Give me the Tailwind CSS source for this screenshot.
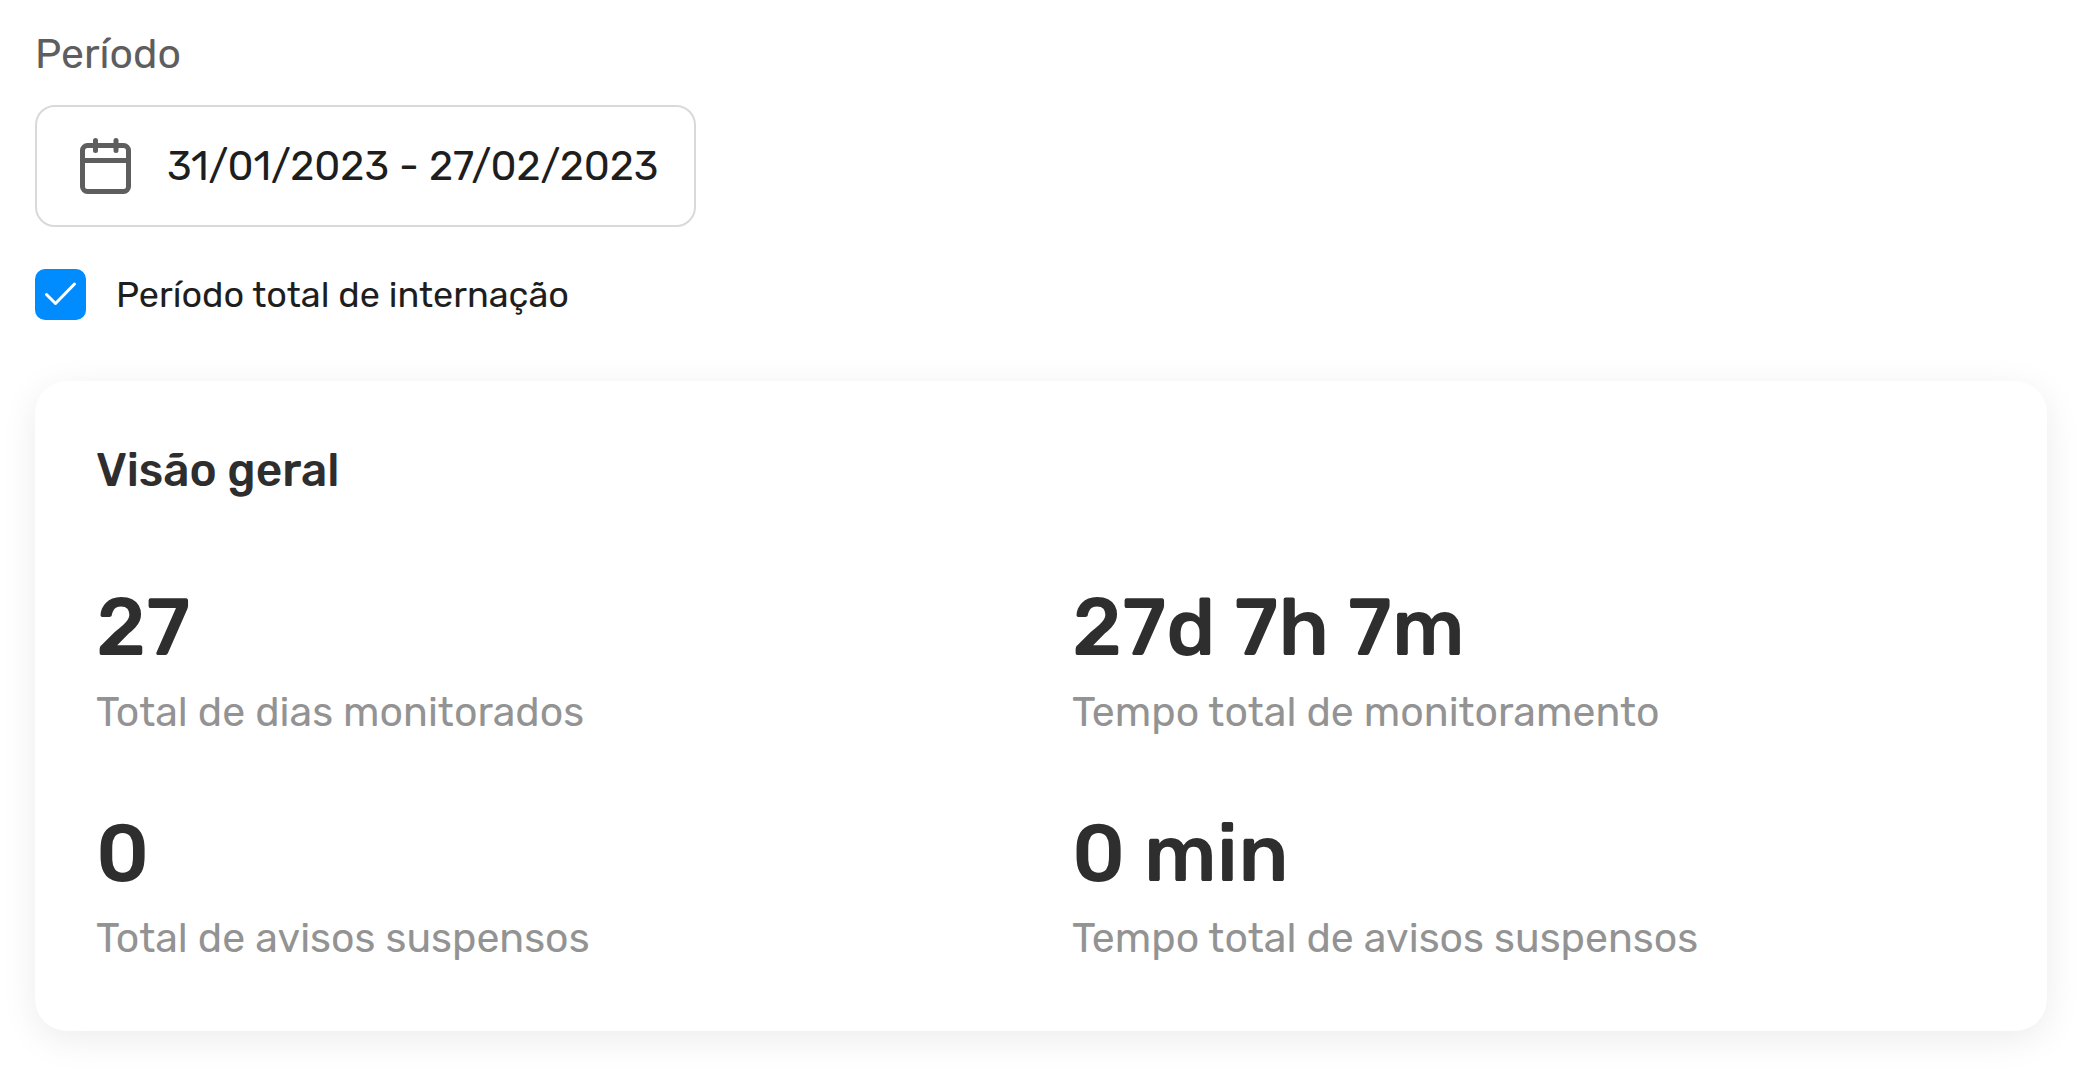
<!DOCTYPE html>
<html lang="pt-BR">
<head>
<meta charset="utf-8">
<meta name="viewport" content="width=device-width, initial-scale=1">
<title>Visão geral</title>
<script src="https://cdn.jsdelivr.net/npm/@tailwindcss/browser@4"></script>
</head>
<body class="bg-white font-['Rubik','Inter',sans-serif] text-[#1e1e1e]">
<main class="pt-[30px] pr-[53px] pb-12 pl-[35px]">
  <form class="flex flex-col items-start">
    <label for="period" class="text-[41px] leading-[48px] text-[#5e5e5e]">Período</label>
    <div class="mt-[27px] flex h-[122px] w-full max-w-[661px] items-center gap-[35px] rounded-[20px] border-2 border-[#d9d9d9] pl-[42px]">
      <svg class="h-14 w-[53px] shrink-0" viewBox="0 0 53 56" fill="none" stroke="#5e5e5e" stroke-width="5" stroke-linecap="round" aria-hidden="true">
        <rect x="3.500" y="7.500" width="46" height="46" rx="5"/>
        <path d="M3.500 22.500h46M16.500 2.500v10M37 2.500v10"/>
      </svg>
      <input id="period" type="text" readonly value="31/01/2023 - 27/02/2023" class="min-w-0 flex-1 bg-transparent text-[41px] leading-[48px] outline-none">
    </div>
    <label for="full-stay" class="mt-[42px] flex items-center gap-[30px] text-[36px] leading-[48px]">
      <span class="grid size-[51px] shrink-0">
        <input id="full-stay" type="checkbox" checked class="col-start-1 row-start-1 size-[51px] appearance-none rounded-[10px] border-2 border-[#d9d9d9] checked:border-0 checked:bg-[#008cff]">
        <svg class="pointer-events-none col-start-1 row-start-1 size-[51px]" viewBox="0 0 51 51" fill="none" stroke="#fff" stroke-width="3" stroke-linecap="round" stroke-linejoin="round" aria-hidden="true">
          <path d="M11.500 25.500l9 9L39.500 15"/>
        </svg>
      </span>
      Período total de internação
    </label>
  </form>

  <section class="mt-[61px] rounded-[32px] bg-white px-[61px] pt-[62px] pb-[69px] shadow-[0_8px_36px_rgba(0,0,0,0.08)]">
    <h2 class="text-[46px] leading-[56px] font-medium text-[#2e2e2e]">Visão geral</h2>
    <dl class="mt-[81px] grid grid-cols-2 gap-x-[62px] gap-y-[70px]">
      <div class="flex flex-col-reverse gap-3.5">
        <dt class="text-[41px] leading-[48px] text-[#939393]">Total de dias monitorados</dt>
        <dd class="text-[81px] leading-[94px] font-medium text-[#2e2e2e]">27</dd>
      </div>
      <div class="flex flex-col-reverse gap-3.5">
        <dt class="text-[41px] leading-[48px] text-[#939393]">Tempo total de monitoramento</dt>
        <dd class="text-[81px] leading-[94px] font-medium text-[#2e2e2e]">27d 7h 7m</dd>
      </div>
      <div class="flex flex-col-reverse gap-3.5">
        <dt class="text-[41px] leading-[48px] text-[#939393]">Total de avisos suspensos</dt>
        <dd class="text-[81px] leading-[94px] font-medium text-[#2e2e2e]">0</dd>
      </div>
      <div class="flex flex-col-reverse gap-3.5">
        <dt class="text-[41px] leading-[48px] text-[#939393]">Tempo total de avisos suspensos</dt>
        <dd class="text-[81px] leading-[94px] font-medium text-[#2e2e2e]">0 min</dd>
      </div>
    </dl>
  </section>
</main>
</body>
</html>
